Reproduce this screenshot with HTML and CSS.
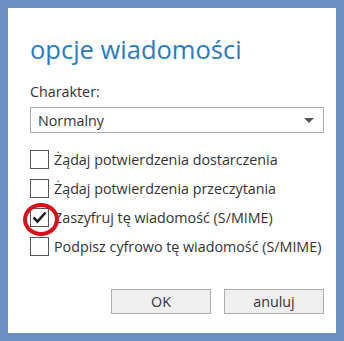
FILE: index.html
```html
<!DOCTYPE html>
<html lang="pl">

<head>
    <meta charset="UTF-8">
    <meta name="viewport" content="width=device-width, initial-scale=1.0">
    <title>opcje wiadomości</title>
    <link rel="stylesheet" href="styles.css">
</head>

<body>
    <div class="frame">
        <div class="dialog">
            <h1 class="title">opcje wiadomości</h1>

            <div class="field">
                <div class="field-label">Charakter:</div>
                <div class="select">
                    <span>Normalny</span>
                    <span class="arrow"></span>
                </div>
            </div>

            <div class="options">
                <label class="option"><span class="box"></span> Żądaj potwierdzenia dostarczenia</label>
                <label class="option"><span class="box"></span> Żądaj potwierdzenia przeczytania</label>
                <label class="option">
                    <span class="box">
                        <svg width="15" height="13" viewBox="0 0 15 13"><path d="M1.5 6.5 L5.5 10.5 L13.5 1.5" fill="none" stroke="#222" stroke-width="2.6"/></svg>
                    </span> Zaszyfruj tę wiadomość (S/MIME)
                    <span class="ring"></span>
                </label>
                <label class="option"><span class="box"></span> Podpisz cyfrowo tę wiadomość (S/MIME)</label>
            </div>

            <div class="buttons">
                <button class="btn">OK</button>
                <button class="btn">anuluj</button>
            </div>
        </div>
    </div>
</body>

</html>
```

FILE: styles.css
```css
body {
    margin: 0;
    font-family: "Open Sans", "Noto Sans", sans-serif;
    color: #333;
}

.frame {
    width: 344px;
    height: 341px;
    box-sizing: border-box;
    border: 8px solid #6b8fc0;
    background: white;
}

.dialog {
    padding: 24px 12px 0 22px;
}

.title {
    margin: 0 0 16px 0;
    font-size: 25.5px;
    font-weight: 400;
    line-height: 34px;
    color: #2b7bc2;
}

.field-label {
    font-size: 14.3px;
    line-height: 20px;
    margin-bottom: 5px;
}

.select {
    display: flex;
    justify-content: space-between;
    align-items: center;
    height: 26px;
    box-sizing: border-box;
    border: 1px solid #adadad;
    padding: 0 9px 0 7px;
    font-size: 14.3px;
}

.arrow {
    width: 0;
    height: 0;
    border-left: 5px solid transparent;
    border-right: 5px solid transparent;
    border-top: 5px solid #555;
}

.options {
    margin-top: 12px;
}

.option {
    position: relative;
    display: flex;
    align-items: center;
    gap: 5px;
    height: 29px;
    font-size: 14.3px;
    white-space: nowrap;
}

.box {
    display: flex;
    align-items: center;
    justify-content: center;
    flex-shrink: 0;
    width: 19px;
    height: 19px;
    box-sizing: border-box;
    border: 1px solid #555;
    background: white;
}

.ring {
    position: absolute;
    left: -7px;
    top: 0;
    width: 36px;
    height: 33px;
    box-sizing: border-box;
    border: 4px solid #d8101c;
    border-radius: 50%;
}

.buttons {
    display: flex;
    justify-content: flex-end;
    gap: 13px;
    margin-top: 28px;
}

.btn {
    width: 100px;
    height: 25px;
    border: 1px solid #adadad;
    background: #efefef;
    font-family: inherit;
    font-size: 14.3px;
    color: #333;
    padding: 0;
}
```
